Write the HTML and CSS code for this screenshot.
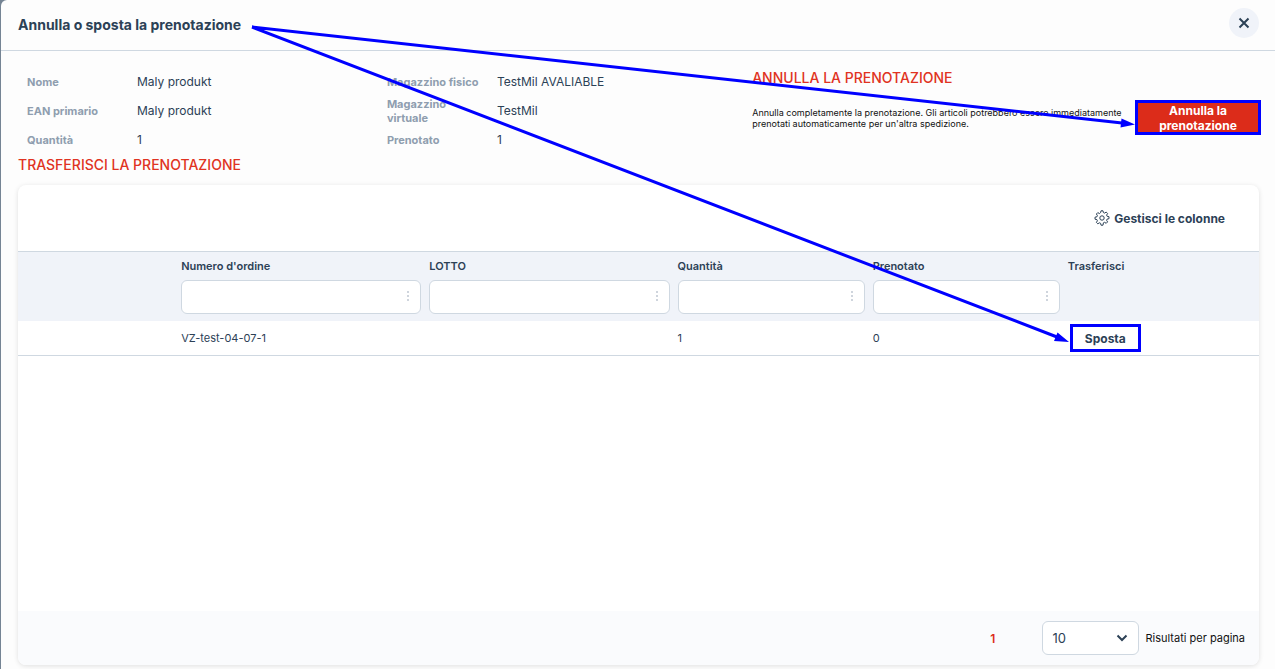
FILE: index.html
```
<!DOCTYPE html>
<html lang="it">
<head>
  <meta charset="UTF-8">
  <meta name="viewport" content="width=device-width, initial-scale=1.0">
  <title>Annulla o sposta la prenotazione</title>
  <link rel="stylesheet" href="styles.css">
</head>
<body>

  <div class="modal">
    <header class="modal-header">
      <h1>Annulla o sposta la prenotazione</h1>
      <button type="button" class="close" aria-label="Chiudi">
        <svg width="12" height="12" viewBox="0 0 12 12"><path d="M1.500 1.500l9 9M10.500 1.500l-9 9"/></svg>
      </button>
    </header>

    <main class="modal-body">
      <section class="summary">
        <dl class="details">
          <div><dt>Nome</dt><dd>Maly produkt</dd></div>
          <div><dt>EAN primario</dt><dd>Maly produkt</dd></div>
          <div><dt>Quantità</dt><dd>1</dd></div>
        </dl>
        <dl class="details">
          <div><dt>Magazzino fisico</dt><dd>TestMil AVALIABLE</dd></div>
          <div><dt>Magazzino virtuale</dt><dd>TestMil</dd></div>
          <div><dt>Prenotato</dt><dd>1</dd></div>
        </dl>
        <div class="cancel">
          <h2>ANNULLA LA PRENOTAZIONE</h2>
          <div class="cancel-row">
            <p>Annulla completamente la prenotazione. Gli articoli potrebbero essere immediatamente prenotati automaticamente per un'altra spedizione.</p>
            <button type="button" class="btn-cancel">Annulla la prenotazione</button>
          </div>
        </div>
      </section>

      <h2>TRASFERISCI LA PRENOTAZIONE</h2>

      <section class="card">
        <div class="toolbar">
          <button type="button" class="columns">
            <svg width="16" height="16" viewBox="0 0 16 16">
              <path d="M6.600 2.600L7 .8h2l.4 1.800 1.200.5 1.600-1 1.400 1.400-1 1.600.5 1.200 1.900.4v2l-1.900.4-.5 1.200 1 1.600-1.400 1.400-1.600-1-1.200.5L9 15.200H7l-.4-1.900-1.200-.5-1.600 1-1.400-1.400 1-1.600-.5-1.200L1 9.200v-2l1.900-.4.5-1.200-1-1.600 1.400-1.400 1.600 1z"/>
              <circle cx="8" cy="8" r="2.200"/>
            </svg>
            Gestisci le colonne
          </button>
        </div>

        <table>
          <colgroup>
            <col class="col-empty">
            <col class="col-wide">
            <col class="col-wide">
            <col class="col-narrow">
            <col class="col-narrow">
            <col class="col-narrow">
          </colgroup>
          <thead>
            <tr>
              <th></th>
              <th><label for="f-order">Numero d'ordine</label><div class="filter"><input type="text" id="f-order"><span class="dots"></span></div></th>
              <th><label for="f-lot">LOTTO</label><div class="filter"><input type="text" id="f-lot"><span class="dots"></span></div></th>
              <th><label for="f-qty">Quantità</label><div class="filter"><input type="text" id="f-qty"><span class="dots"></span></div></th>
              <th><label for="f-booked">Prenotato</label><div class="filter"><input type="text" id="f-booked"><span class="dots"></span></div></th>
              <th>Trasferisci</th>
            </tr>
          </thead>
          <tbody>
            <tr>
              <td></td>
              <td>VZ-test-04-07-1</td>
              <td></td>
              <td>1</td>
              <td>0</td>
              <td><button type="button" class="btn-move">Sposta</button></td>
            </tr>
          </tbody>
        </table>

        <footer class="pager">
          <a href="#" class="page">1</a>
          <div class="select">
            <select id="per-page">
              <option>10</option>
              <option>25</option>
              <option>50</option>
            </select>
            <svg width="12" height="8" viewBox="0 0 12 8"><path d="M1.500 1.500L6 6l4.500-4.500"/></svg>
          </div>
          <label for="per-page">Risultati per pagina</label>
        </footer>
      </section>
    </main>

    <!-- arrows from the title to the two buttons -->
    <svg class="arrows" width="1275" height="400" viewBox="0 0 1275 400">
      <path class="line" d="M252 27L1122 123M252 27L1057 337"/>
      <path class="head" d="M1135 124.500L1120.500 127.500L1121.500 118.500ZM1069 342L1054 341L1057.500 332.500Z"/>
    </svg>
  </div>

</body>
</html>
```

FILE: styles.css
```
* {
  box-sizing: border-box;
}
body {
  margin: 0;
  font-family: Inter, "Liberation Sans", sans-serif;
  color: #2c4156;
  background-color: #758494;
}
h1, h2, p, dl, dd {
  margin: 0;
}
button {
  font-family: inherit;
  color: inherit;
  border: none;
  cursor: pointer;
}
svg {
  fill: none;
  stroke: #2c4156;
}
.modal {
  position: relative;
  display: flex;
  flex-direction: column;
  min-height: 100vh;
  margin-left: 1px;
  background-color: #fdfdfd;
  border-radius: 6px 0 0 0;
  overflow: hidden;
}
.modal-header {
  display: flex;
  align-items: flex-start;
  justify-content: space-between;
  height: 51px;
  padding: 8px 16px 0 17px;
  border-bottom: 1px solid #cfd8e1;
}
h1 {
  font-size: 14px;
  line-height: 34px;
  font-weight: 700;
}
h2 {
  font-size: 14px;
  line-height: 20px;
  font-weight: 500;
  color: #e03322;
}
.close {
  display: flex;
  align-items: center;
  justify-content: center;
  width: 30px;
  height: 30px;
  padding: 0;
  border-radius: 50%;
  background-color: #f0f3f9;
}
.close svg {
  stroke-width: 2;
}
.modal-body {
  display: flex;
  flex-direction: column;
  flex: 1;
  padding: 16px 16px 4px 17px;
}

/* booking summary */
.summary {
  display: grid;
  grid-template-columns: 29fr 30fr 41fr;
  margin-bottom: 1px;
}
.details div {
  display: flex;
  align-items: center;
  height: 29px;
  padding-left: 9px;
}
.details dt {
  width: 110px;
  padding-right: 8px;
  font-size: 11px;
  line-height: 14px;
  font-weight: 700;
  color: #8f9eaf;
}
.details dd {
  font-size: 12px;
  line-height: 16px;
}
.cancel {
  padding-top: 1px;
  padding-left: 2px;
}
.cancel-row {
  display: flex;
  align-items: center;
  justify-content: space-between;
  gap: 12px;
  margin-top: 15px;
}
.cancel p {
  font-size: 9px;
  line-height: 11px;
  color: #111;
}
.btn-cancel {
  flex: none;
  width: 120px;
  height: 29px;
  margin-right: 1px;
  padding: 0;
  font-size: 12px;
  line-height: 15px;
  font-weight: 700;
  color: #fff;
  background-color: #dc2c1a;
  outline: 3px solid #00f;
}

/* orders table */
.card {
  display: flex;
  flex-direction: column;
  flex: 1;
  margin-top: 10px;
  background-color: #fff;
  border-radius: 8px;
  box-shadow: 0 1px 5px rgba(0, 0, 0, 0.12);
  overflow: hidden;
}
.toolbar {
  display: flex;
  align-items: center;
  justify-content: flex-end;
  height: 66px;
  padding-right: 34px;
}
.columns {
  display: flex;
  align-items: center;
  gap: 4px;
  padding: 0;
  font-size: 12px;
  font-weight: 700;
  background: none;
}
table {
  width: 100%;
  table-layout: fixed;
  border-spacing: 0;
}
.col-empty {
  width: 159px;
}
.col-wide {
  width: 248px;
}
.col-narrow {
  width: 195px;
}
th, td {
  padding: 0 4px;
  font-size: 11px;
  text-align: left;
}
th {
  height: 70px;
  padding-top: 6px;
  line-height: 16px;
  font-weight: 600;
  vertical-align: top;
  background-color: #f0f3f9;
  border-top: 1px solid #cfd8e1;
}
th label {
  display: block;
}
.filter {
  position: relative;
  margin-top: 6px;
}
.filter input {
  display: block;
  width: 100%;
  height: 34px;
  padding: 0 24px 0 8px;
  border: 1px solid #cfd8e1;
  border-radius: 6px;
  background-color: #fff;
}
.dots, .dots::before, .dots::after {
  position: absolute;
  width: 2px;
  height: 2px;
  background-color: #cfd5dd;
}
.dots {
  top: 15px;
  right: 12px;
}
.dots::before, .dots::after {
  content: "";
  left: 0;
}
.dots::before {
  top: -4px;
}
.dots::after {
  top: 4px;
}
td {
  height: 35px;
  line-height: 16px;
  border-bottom: 1px solid #cfd8e1;
}
.btn-move {
  display: block;
  width: 65px;
  height: 22px;
  margin-left: 5px;
  padding: 0;
  font-size: 12px;
  font-weight: 700;
  background: none;
  outline: 3px solid #00f;
}

.pager {
  display: flex;
  align-items: center;
  justify-content: flex-end;
  height: 54px;
  margin-top: auto;
  padding-right: 14px;
  font-size: 11px;
  color: #111;
  background-color: #fafbfd;
}
.page {
  margin-right: 47px;
  font-size: 12px;
  font-weight: 600;
  color: #dc2c1a;
  text-decoration: none;
}
.select {
  position: relative;
  margin-right: 6px;
}
.select select {
  display: block;
  width: 97px;
  height: 34px;
  padding: 0 9px;
  font-family: inherit;
  font-size: 13px;
  color: #2c4156;
  background-color: #fff;
  border: 1px solid #cfd8e1;
  border-radius: 6px;
  appearance: none;
}
.select svg {
  position: absolute;
  top: 13px;
  right: 11px;
  stroke-width: 2;
  pointer-events: none;
}

.arrows {
  position: absolute;
  top: 0;
  left: -1px;
  pointer-events: none;
}
.arrows .line {
  stroke: #00f;
  stroke-width: 3;
}
.arrows .head {
  fill: #00f;
  stroke: none;
}
```
